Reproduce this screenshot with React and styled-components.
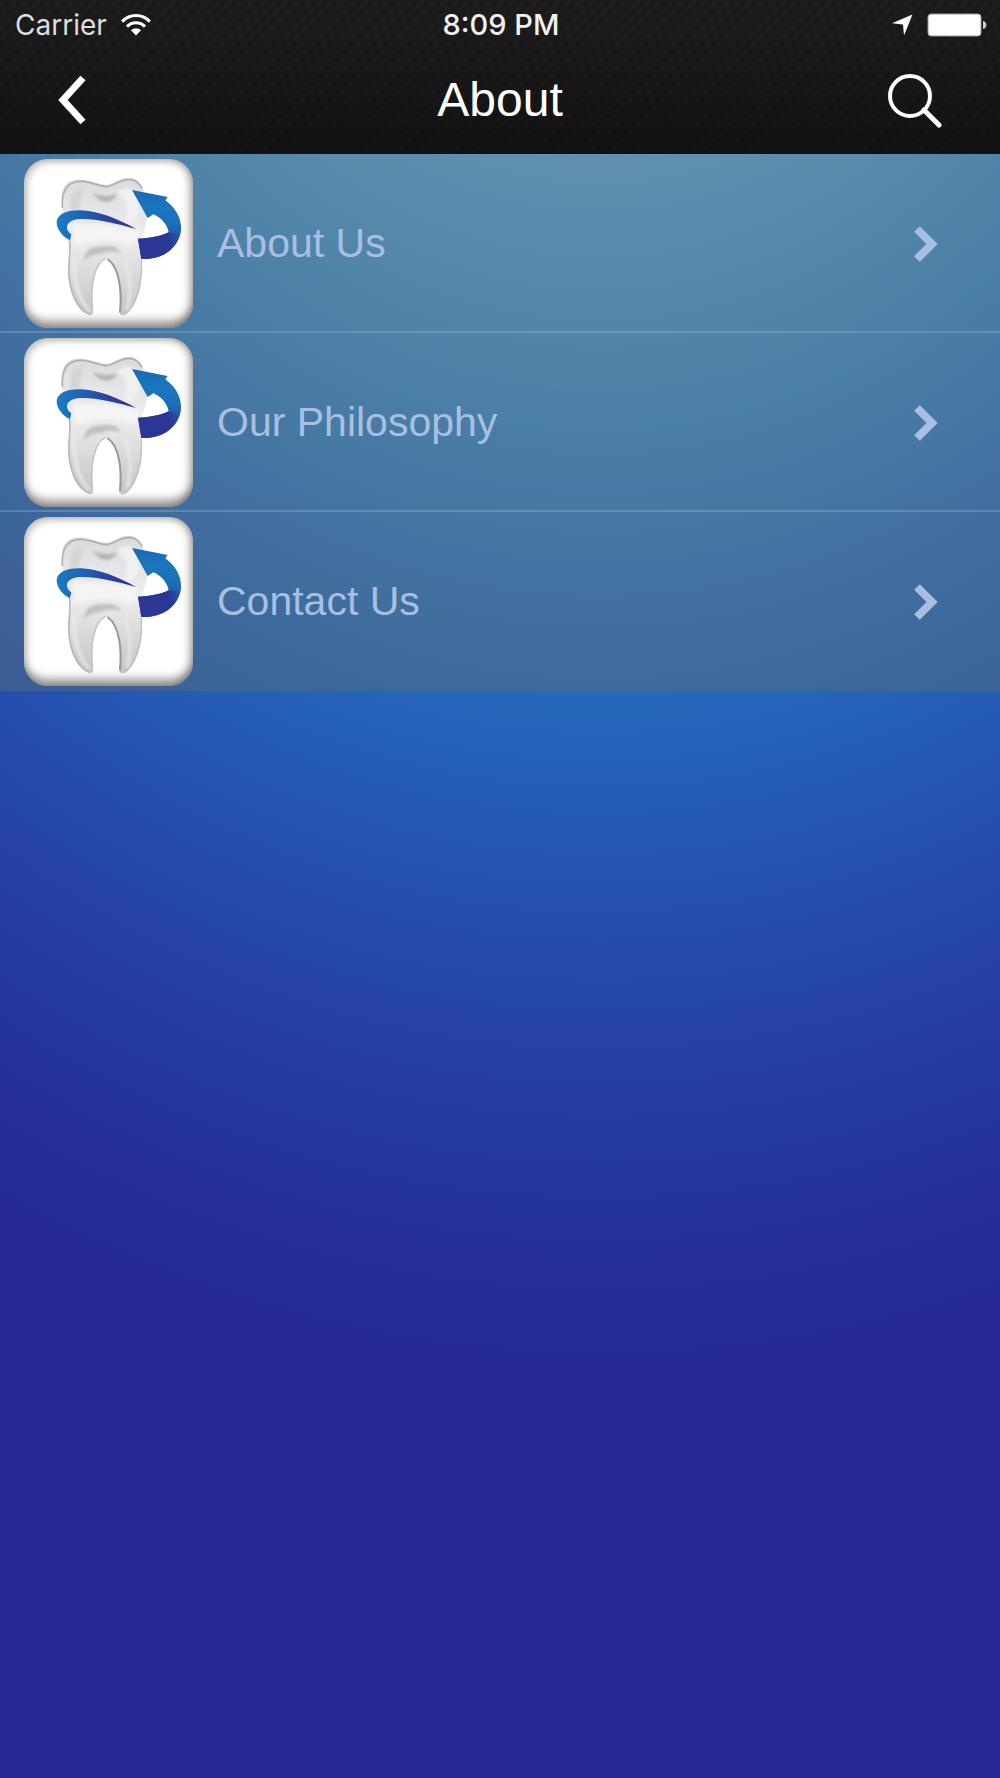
import React from "react";
import styled, { createGlobalStyle } from "styled-components";

const GlobalStyle = createGlobalStyle`
  body {
    margin: 0;
    background: #252795;
  }

  * {
    box-sizing: border-box;
  }
`;

const Screen = styled.div`
  min-height: 100vh;
  font-family: "Liberation Sans", Arial, sans-serif;
  background: radial-gradient(
    ellipse 145% 100% at 60% -22%,
    #64abdc 28%,
    #5da7da 31%,
    #3b8acc 46%,
    #2566bb 62%,
    #2450ae 73%,
    #2543a5 80%,
    #25359c 89%,
    #252795 100%
  );
`;

const Header = styled.header`
  color: #fff;
  background:
    repeating-linear-gradient(
      135deg,
      rgba(0, 0, 0, 0.16) 0px,
      rgba(0, 0, 0, 0) 4px,
      rgba(0, 0, 0, 0.16) 8px
    ),
    linear-gradient(#1f1f1f, #131313);
`;

const StatusBar = styled.div`
  display: grid;
  grid-template-columns: 1fr auto 1fr;
  align-items: center;
  height: 50px;
  padding: 0 13px 0 15px;
  font-family: Inter, sans-serif;
  font-size: 28px;
  line-height: 50px;
`;

const StatusGroup = styled.div`
  display: flex;
  align-items: center;
  justify-content: ${(props) => props.$align || "flex-start"};
  gap: 14px;
  color: #dedede;
`;

const Clock = styled.time`
  font-size: 29px;
  font-weight: 500;
  color: #f2f2f2;
`;

const NavBar = styled.div`
  display: grid;
  grid-template-columns: 1fr auto 1fr;
  align-items: center;
  height: 104px;
  padding: 0 52px 4px;
`;

const Title = styled.h1`
  margin: 0;
  font-size: 48px;
  font-weight: 400;
  line-height: 100px;
`;

const IconButton = styled.button`
  display: flex;
  justify-self: ${(props) => props.$side};
  padding: 0;
  border: 0;
  background: none;
  color: inherit;
  cursor: pointer;
`;

const Menu = styled.ul`
  margin: 0;
  padding: 0;
  list-style: none;
  background: rgba(97, 110, 110, 0.4);
`;

const MenuItem = styled.li`
  border-bottom: 2px solid rgba(160, 195, 230, 0.3);

  &:last-child {
    border-bottom-color: transparent;
  }
`;

const MenuLink = styled.a`
  display: flex;
  align-items: center;
  gap: 24px;
  height: 177px;
  padding: 2px 61px 0 24px;
  color: #a9bfe1;
  font-size: 41px;
  text-decoration: none;
`;

const Label = styled.span`
  flex: 1;
`;

const Tile = styled.span`
  display: flex;
  width: 169px;
  height: 169px;
  border-radius: 24px;
  background: #fff;
  overflow: hidden;
  box-shadow:
    inset 0 -12px 10px -5px rgba(70, 65, 60, 0.55),
    inset -6px 0 8px -3px rgba(70, 65, 60, 0.45),
    inset 3px 3px 7px rgba(90, 85, 80, 0.35);
`;

const SharedDefs = styled.svg`
  display: block;
`;

const items = ["About Us", "Our Philosophy", "Contact Us"];

const WifiIcon = () => (
  <svg width="30" height="22" viewBox="0 0 30 22" aria-hidden="true">
    <g fill="none" stroke="#fff" strokeWidth="3">
      <path d="M1.2 7.6C9-.4 21-.4 28.8 7.6" />
      <path d="M6 12.6c5-5.2 13-5.2 18 0" />
    </g>
    <path d="M10 16.3c3-2.8 7-2.8 10 0L15 21.6z" fill="#fff" />
  </svg>
);

const LocationIcon = () => (
  <svg width="21" height="22" viewBox="0 0 21 22" aria-hidden="true">
    <path d="M20.5.5L12 21.5 11 10.5 0 9.2z" fill="#fff" />
  </svg>
);

const BatteryIcon = () => (
  <svg width="60" height="24" viewBox="0 0 60 24" aria-hidden="true">
    <rect x="1" y="1" width="53" height="22" rx="3" fill="#fff" stroke="#999" />
    <path d="M56 8c4.5 1 4.5 7 0 8z" fill="#ccc" />
  </svg>
);

const BackIcon = () => (
  <svg width="40" height="50" viewBox="0 0 40 50" aria-hidden="true">
    <path d="M31 3L11 25l20 22" fill="none" stroke="#fff" strokeWidth="7" />
  </svg>
);

const SearchIcon = () => (
  <svg width="60" height="56" viewBox="0 0 60 56" aria-hidden="true">
    <g fill="none" stroke="#fff" strokeWidth="4">
      <circle cx="22" cy="24" r="20" />
      <path d="M36 38l15 15" strokeWidth="5" strokeLinecap="round" />
    </g>
  </svg>
);

const ChevronIcon = () => (
  <svg width="26" height="38" viewBox="0 0 26 38" aria-hidden="true">
    <path d="M4 4l15 15L4 34" fill="none" stroke="#a9bfe1" strokeWidth="8" />
  </svg>
);

// Shared by every tooth drawing, so it is rendered once per page.
const ToothGradients = () => (
  <SharedDefs width="0" height="0" aria-hidden="true">
    <defs>
      <linearGradient id="enamel" x1="0" y1="0" x2="0" y2="1">
        <stop offset="0" stopColor="#dadadc" />
        <stop offset="0.25" stopColor="#e6e6e8" />
        <stop offset="0.45" stopColor="#ededee" />
        <stop offset="0.65" stopColor="#dededf" />
        <stop offset="1" stopColor="#c4c4c7" />
      </linearGradient>
      <linearGradient id="swoosh" x1="0" y1="0" x2="1" y2="0">
        <stop offset="0" stopColor="#1a7cc4" />
        <stop offset="0.35" stopColor="#2060b0" />
        <stop offset="0.6" stopColor="#2b45a0" />
        <stop offset="1" stopColor="#2e2f93" />
      </linearGradient>
      <linearGradient id="arrow" x1="0" y1="0" x2="0" y2="1">
        <stop offset="0" stopColor="#1b68b4" />
        <stop offset="0.25" stopColor="#1a76be" />
        <stop offset="0.5" stopColor="#1b70ba" />
        <stop offset="0.7" stopColor="#2454a8" />
        <stop offset="0.9" stopColor="#2c3795" />
      </linearGradient>
      <linearGradient id="band" x1="0" y1="0" x2="1" y2="0">
        <stop offset="0.7" stopColor="#2c3795" />
        <stop offset="1" stopColor="#2c3795" stopOpacity="0" />
      </linearGradient>
      <filter id="soft" x="-20%" y="-20%" width="140%" height="140%">
        <feGaussianBlur stdDeviation="5" />
      </filter>
      <filter id="edge" x="-10%" y="-10%" width="120%" height="120%">
        <feGaussianBlur stdDeviation="2" />
      </filter>
    </defs>
  </SharedDefs>
);

const ToothIcon = () => (
  <svg width="169" height="169" viewBox="72 28 507 507" aria-hidden="true">
    <path
      d="M185 150C183 105 208 86 248 90C280 93 300 106 320 105C345 102 355 84 388 84C412 86 425 102 431 125C448 165 447 215 425 262C420 290 430 340 424 392C418 440 395 490 372 497C362 499 357 494 358 484C362 430 360 345 317 325C280 345 272 420 279 484C280 496 274 499 264 495C228 480 208 430 205 370C203 325 214 290 208 255C194 225 186 190 185 150Z"
      fill="url(#enamel)"
      filter="url(#edge)"
    />
    <g filter="url(#edge)" fill="none">
      <path
        d="M187 175C183 115 208 93 248 95C280 98 300 112 322 111C348 106 360 89 388 89C405 90 418 100 426 116"
        stroke="#b0b0b3"
        strokeWidth="5"
      />
      <path
        d="M208 270C214 300 204 340 207 380C212 430 232 478 268 493"
        stroke="#b9b9bc"
        strokeWidth="5"
      />
      <path
        d="M424 330C428 400 410 470 372 495"
        stroke="#bebec1"
        strokeWidth="4"
      />
      <path
        d="M322 328C360 352 366 430 360 488"
        stroke="#98989c"
        strokeWidth="6"
      />
      <path
        d="M278 480C270 420 280 342 317 326"
        stroke="#c0c0c3"
        strokeWidth="4"
      />
    </g>
    <g filter="url(#soft)">
      <path
        d="M212 182C208 140 218 116 242 116C254 118 244 140 236 182Z"
        fill="#d4d4d7"
      />
      <path
        d="M350 130C380 105 410 112 418 150C425 190 405 225 370 222C390 190 385 150 350 130Z"
        fill="#f0f0f1"
      />
      <path
        d="M278 130C300 139 325 142 352 134C340 155 325 160 308 155C295 150 286 142 278 130Z"
        fill="#b2b2b6"
      />
      <path
        d="M222 222C260 225 350 225 418 245C416 262 408 275 396 285C350 268 290 266 235 285C222 268 216 245 222 222Z"
        fill="#f4f4f5"
      />
      <path
        d="M252 338C252 300 275 288 312 290C330 285 355 292 364 312C345 304 325 303 304 312C278 314 262 322 252 338Z"
        fill="#c0c0c4"
      />
      <path
        d="M222 320C220 390 236 450 268 484"
        fill="none"
        stroke="#eeeeef"
        strokeWidth="7"
      />
      <path
        d="M372 330C394 380 396 430 380 480"
        fill="none"
        stroke="#e8e8e9"
        strokeWidth="8"
      />
    </g>
    <path
      d="M210 272C180 256 166 230 171 210C180 188 210 180 245 182C300 186 350 206 408 238C345 220 285 206 240 208C214 210 199 220 201 236C203 244 208 250 214 254Z"
      fill="url(#swoosh)"
    />
    <path
      d="M396 121L503 142L496 152C532 178 548 215 542 250C530 300 485 330 424 328L414 267C450 266 480 260 506 248C502 225 485 205 460 194L443 205Z"
      fill="url(#arrow)"
    />
    <path
      d="M414 267C450 266 480 260 506 248L541 252C530 300 485 330 424 328Z"
      fill="url(#band)"
    />
  </svg>
);

/**
 * Menu screen of the practice's app.
 * @returns {JSX.Element} Header with the list of sub pages.
 */
const App = () => (
  <Screen>
    <GlobalStyle />
    <ToothGradients />
    <Header>
      <StatusBar>
        <StatusGroup>
          <span>Carrier</span>
          <WifiIcon />
        </StatusGroup>
        <Clock>8:09 PM</Clock>
        <StatusGroup $align="flex-end">
          <LocationIcon />
          <BatteryIcon />
        </StatusGroup>
      </StatusBar>
      <NavBar>
        <IconButton type="button" aria-label="Back" $side="start">
          <BackIcon />
        </IconButton>
        <Title>About</Title>
        <IconButton type="button" aria-label="Search" $side="end">
          <SearchIcon />
        </IconButton>
      </NavBar>
    </Header>
    <Menu>
      {items.map((item) => (
        <MenuItem key={item}>
          <MenuLink href="#">
            <Tile>
              <ToothIcon />
            </Tile>
            <Label>{item}</Label>
            <ChevronIcon />
          </MenuLink>
        </MenuItem>
      ))}
    </Menu>
  </Screen>
);

export default App;
